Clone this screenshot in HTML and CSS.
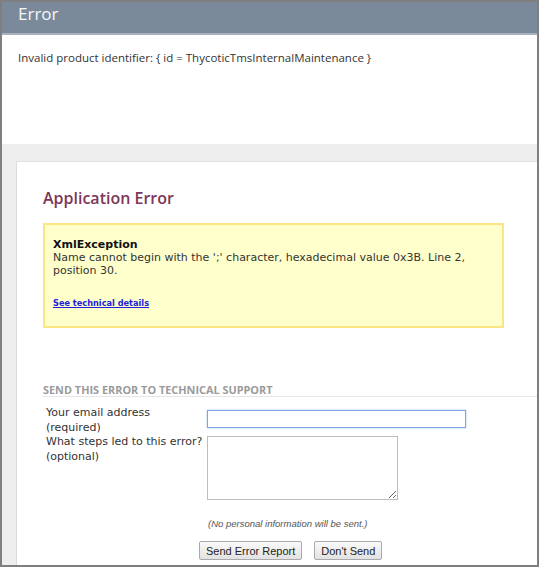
FILE: index.html
```html
<!DOCTYPE html>
<html>
<head>
<meta charset="utf-8">
<link rel="stylesheet" href="styles.css">
</head>
<body>
<div class="frame">
  <div class="header">Error</div>
  <div class="message">Invalid product identifier: { id = ThycoticTmsInternalMaintenance }</div>
  <div class="gray">
    <div class="panel">
      <h1 class="title">Application Error</h1>
      <div class="notice">
        <div class="exc">XmlException</div>
        <div class="desc">Name cannot begin with the ';' character, hexadecimal value 0x3B. Line 2, position 30.</div>
        <a class="details" href="#">See technical details</a>
      </div>
      <div class="send-head">SEND THIS ERROR TO TECHNICAL SUPPORT</div>
      <div class="form">
        <div class="row">
          <label class="lbl">Your email address<br>(required)</label>
          <input class="email" type="text">
        </div>
        <div class="row">
          <label class="lbl">What steps led to this error?<br>(optional)</label>
          <textarea class="steps"></textarea>
        </div>
        <div class="note">(No personal information will be sent.)</div>
        <div class="buttons">
          <button class="btn">Send Error Report</button>
          <button class="btn">Don't Send</button>
        </div>
      </div>
    </div>
  </div>
</div>
</body>
</html>
```
FILE: styles.css
```css
html, body {
  margin: 0;
  padding: 0;
  background: #fff;
}
.frame {
  width: 539px;
  height: 567px;
  box-sizing: border-box;
  border: 2px solid #7f7f7f;
  display: flex;
  flex-direction: column;
  overflow: hidden;
}
.header {
  height: 31px;
  background: #7b8a9b;
  border-bottom: 2px solid #a9b3bf;
  color: #f4f6f8;
  font-family: "Open Sans", sans-serif;
  font-size: 17px;
  line-height: 24px;
  padding-left: 16px;
  box-sizing: content-box;
}
.message {
  height: 109px;
  padding: 15px 0 0 16px;
  box-sizing: border-box;
  font-family: "Open Sans", sans-serif;
  font-size: 11.5px;
  line-height: 16px;
  color: #333;
}
.gray {
  flex: 1;
  background: #eeeeee;
  padding: 17px 0 0 14px;
  display: flex;
}
.panel {
  flex: 1;
  background: #fff;
  border-top: 1px solid #e0e0e0;
  border-left: 1px solid #dcdcdc;
  padding: 25px 0 0 26px;
}
.title {
  margin: 0;
  font-family: "Open Sans", sans-serif;
  font-weight: 600;
  font-size: 16px;
  line-height: 22px;
  color: #7d3658;
}
.notice {
  margin-top: 14px;
  width: 449px;
  height: 88px;
  background: #ffffcc;
  border: 2px solid #fbe683;
  padding: 13px 0 0 8px;
  font-family: "DejaVu Sans", Verdana, sans-serif;
  font-size: 11px;
  line-height: 13px;
  color: #333;
}
.exc {
  font-weight: bold;
  color: #111;
}
.desc {
  width: 430px;
}
.details {
  display: inline-block;
  margin-top: 20px;
  font-size: 8.2px;
  font-weight: bold;
  color: #2222dd;
  text-decoration: underline;
}
.send-head {
  margin-top: 56px;
  font-family: "Open Sans", sans-serif;
  font-weight: 700;
  font-size: 10.9px;
  line-height: 12px;
  color: #9a9a9a;
  border-bottom: 1px solid #e6e6e6;
}
.form {
  padding: 9px 0 0 3px;
}
.row {
  display: flex;
  align-items: flex-start;
}
.lbl {
  width: 161px;
  font-family: "DejaVu Sans", Verdana, sans-serif;
  font-size: 11px;
  line-height: 14.5px;
  color: #333;
}
.email {
  width: 253px;
  height: 14px;
  margin: 4px 0 0;
  padding: 1px 2px;
  border: 1px solid #7fa6e0;
  box-shadow: 0 0 2px #a8c4ef;
  outline: none;
}
.steps {
  width: 185px;
  height: 58px;
  margin: 1px 0 0;
  padding: 2px;
  border: 1px solid #bdbdbd;
  resize: both;
}
.note {
  margin: 18px 0 0 162px;
  font-family: "Liberation Sans", Arial, sans-serif;
  font-style: italic;
  font-size: 9.5px;
  line-height: 11px;
  color: #555;
}
.buttons {
  margin: 12px 0 0 153px;
  display: flex;
  gap: 12px;
}
.btn {
  font-family: "Liberation Sans", Arial, sans-serif;
  font-size: 11px;
  height: 19px;
  padding: 0 6px;
  background: linear-gradient(#fafafa, #e2e2e2);
  border: 1px solid #aaa;
  border-radius: 2px;
  color: #222;
}
```
